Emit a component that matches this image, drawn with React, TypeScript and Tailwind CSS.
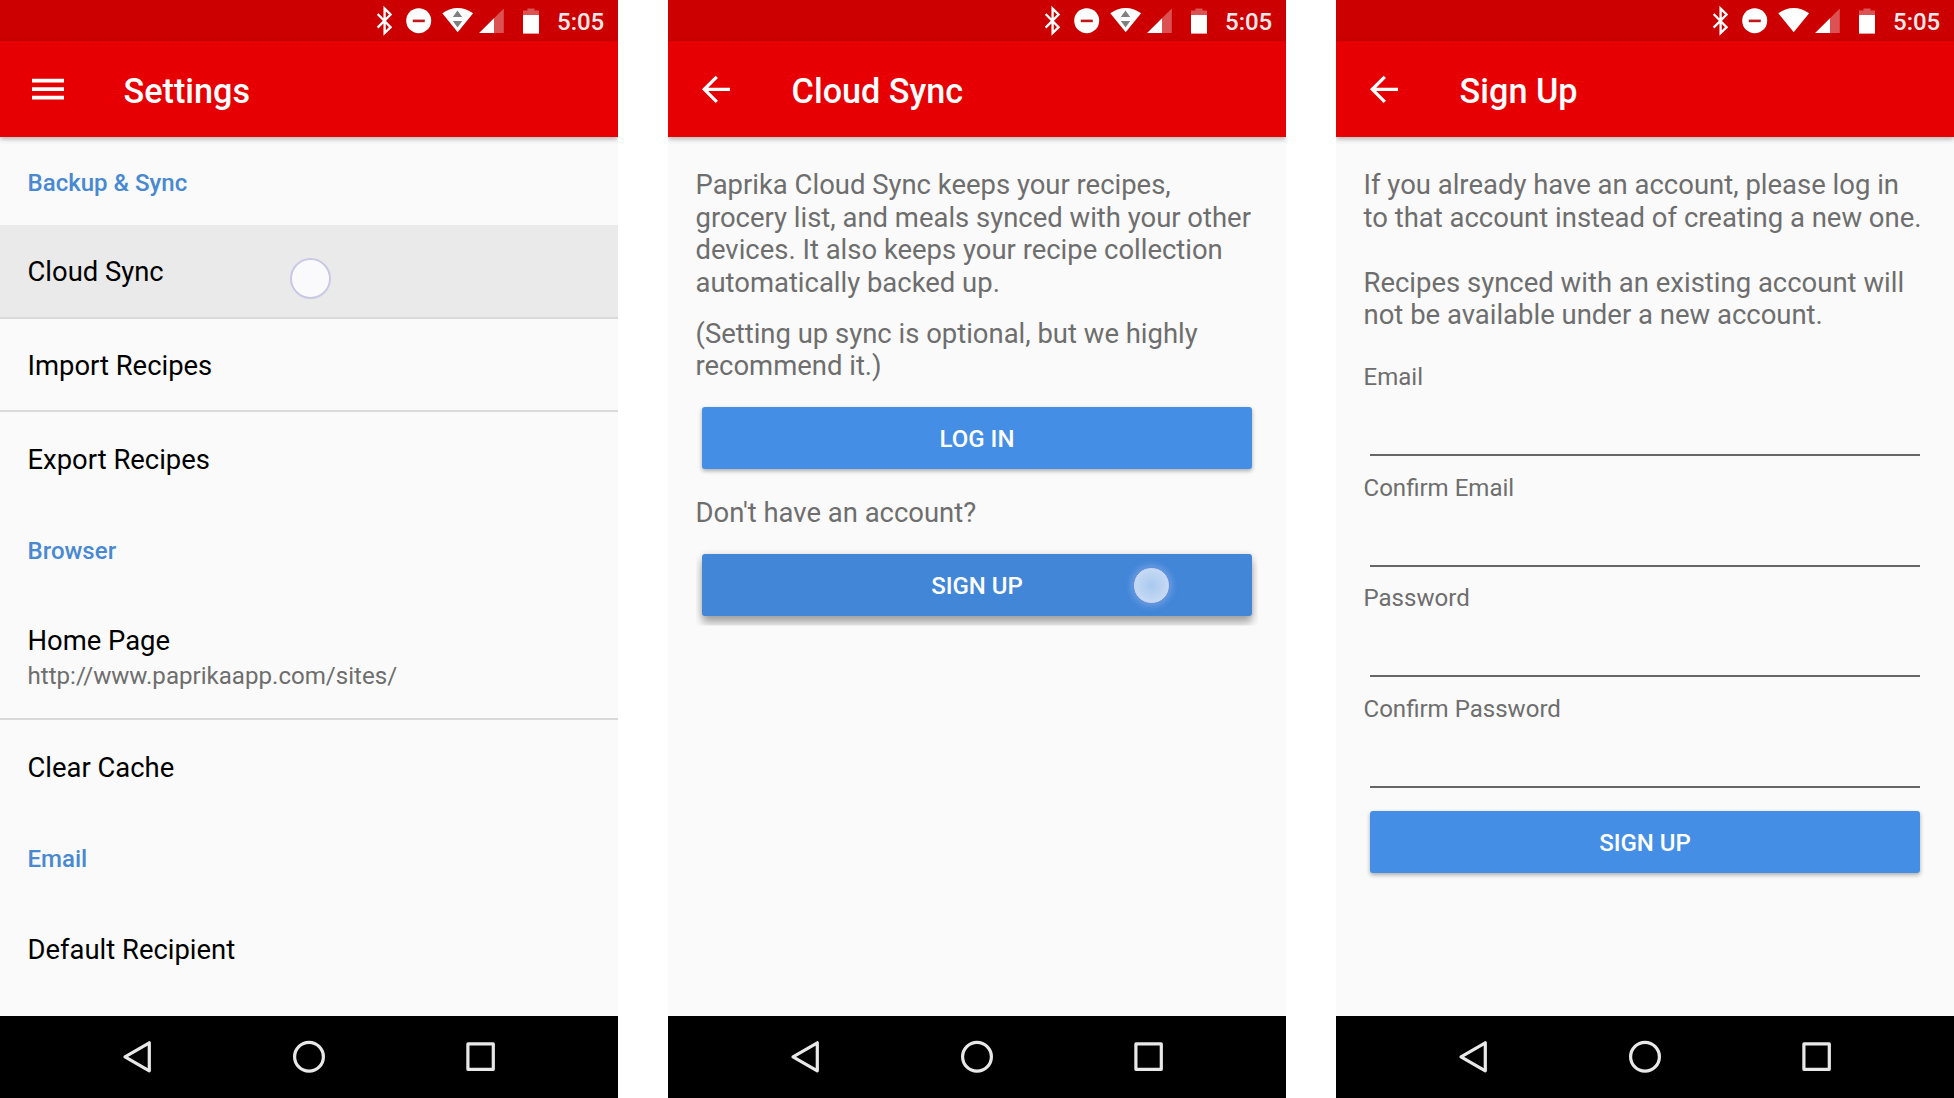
import React from "react";

function StatusBar({ activity }: { activity: boolean }) {
  return (
    <div className="flex h-[41px] shrink-0 items-start bg-[#cc0000]">
      <svg className="h-[41px] w-[548px] shrink-0" viewBox="0 0 548 41" fill="none">
        <path d="M377.6 14 L390.6 27.2 L384.6 33 V8.6 L390.6 14.5 L377.6 27.6" stroke="#fff" strokeWidth="2.3" />
        <circle cx="418.7" cy="20.7" r="12.5" fill="#fff" />
        <rect x="412.8" y="19.6" width="12" height="2.6" fill="#c1161a" />
        <path d="M442.3 13.2 Q457.7 2.8 473.1 13.2 L457.7 32.2 Z" fill="#fff" />
        {activity && <path d="M452.8 17 L457.5 10.6 L462.2 17 Z M452.8 21 L457.5 27.4 L462.2 21 Z" fill="#808080" />}
        <path d="M503.8 8.4 V33 H479.2 Z" fill="#fff" fillOpacity="0.32" />
        <path d="M494 18.2 V33 H479.2 Z" fill="#fff" />
        <path d="M523 15.2 V10.6 H527.4 V8.4 H534.6 V10.6 H539 V15.2 Z" fill="#fff" fillOpacity="0.32" />
        <rect x="523" y="15" width="16" height="18.6" fill="#fff" />
      </svg>
      <span className="pt-px pl-[9px] text-[24px] leading-[42px] font-medium text-[#fbe9e9]">5:05</span>
    </div>
  );
}

function AppBar({ title, menu }: { title: string; menu?: boolean }) {
  return (
    <header className="z-10 flex h-[96px] shrink-0 items-center bg-[#e60004] text-white shadow-[0_2px_5px_rgba(0,0,0,0.3)]">
      <svg className="h-[96px] w-[123.6px] shrink-0" viewBox="0 0 123.6 96" fill="none" stroke="#fff">
        {menu ? (
          <path d="M32 39.7 H64 M32 48.2 H64 M32 56.7 H64" strokeWidth="3.7" />
        ) : (
          <path d="M62 48.3 H36.5 M48.8 35.8 L36.3 48.3 L48.8 60.8" strokeWidth="3.3" />
        )}
      </svg>
      <h1 className="pt-[3px] text-[34.2px] leading-[40px] font-medium">{title}</h1>
    </header>
  );
}

function NavBar() {
  return (
    <nav className="h-[82px] shrink-0 bg-black">
      <svg className="h-[82px] w-[618px]" viewBox="0 0 618 82" fill="none" stroke="#e8e8e8" strokeWidth="3.2" strokeLinejoin="round">
        <path d="M149.3 26.8 V54.8 L125 40.8 Z" />
        <circle cx="309" cy="40.8" r="14.4" />
        <rect x="467.9" y="27.9" width="25.4" height="25.4" />
      </svg>
    </nav>
  );
}

function Phone({ title, menu, activity = false, children }: { title: string; menu?: boolean; activity?: boolean; children: React.ReactNode }) {
  return (
    <section className="flex h-[1098px] w-[618px] shrink-0 flex-col overflow-hidden bg-[#fafafa]">
      <StatusBar activity={activity} />
      <AppBar title={title} menu={menu} />
      <main className="flex flex-1 flex-col">{children}</main>
      <NavBar />
    </section>
  );
}

function SectionTitle({ children }: { children: React.ReactNode }) {
  return (
    <h2 className="flex h-[88px] items-center px-[27.5px] pt-[3px] text-[24.06px] leading-[28px] font-medium text-[#4889d2]">
      {children}
    </h2>
  );
}

const row = "flex h-[93.6px] items-center px-[27.5px] pt-[3px] text-[27.42px] leading-[32px] text-black";
const divider = " border-b-2 border-[#dadada]";

function Button({ children, pressed }: { children: React.ReactNode; pressed?: boolean }) {
  return (
    <button
      className={
        "relative mx-[6.5px] block h-[62px] rounded-[3px] pt-[2px] text-[24px] leading-[28px] font-medium text-white " +
        (pressed
          ? "bg-[#4286d8] shadow-[0_7px_9px_rgba(0,0,0,0.32),0_0_6px_rgba(0,0,0,0.12)] [clip-path:inset(-8px_-6px_-10px_-6px)]"
          : "bg-[#448ee5] shadow-[0_2px_4px_rgba(0,0,0,0.32)]")
      }
    >
      {children}
      {pressed && (
        <span className="absolute top-[13px] left-[431px] size-[37px] rounded-full border border-[#6d8fdc] bg-[radial-gradient(circle,#a9c9ee_0%,#cadcf5_80%)] shadow-[0_0_6px_2px_rgba(140,175,235,0.6)]" />
      )}
    </button>
  );
}

function Field({ label }: { label: string }) {
  return (
    <label className="flex h-[110.4px] flex-col">
      <span className="text-[24.06px] leading-[28px]">{label}</span>
      <input className="mx-[6.5px] h-[65px] border-b-2 border-[#666] bg-transparent outline-none" />
    </label>
  );
}

export default function App() {
  return (
    <div className="flex h-[1098px] w-[1954px] justify-between overflow-hidden bg-white font-[Roboto,sans-serif]">
      <Phone title="Settings" menu activity>
        <SectionTitle>Backup &amp; Sync</SectionTitle>
        <div className={row + " relative bg-[#eaeaea]" + divider}>
          Cloud Sync
          <span className="absolute top-[33px] left-[290px] size-[41px] rounded-full border-2 border-[#c9c8e6] bg-[#fafafc]" />
        </div>
        <div className={row + divider}>Import Recipes</div>
        <div className={row}>Export Recipes</div>
        <SectionTitle>Browser</SectionTitle>
        <div className={"flex h-[126px] flex-col justify-center px-[27.5px] pt-1.5" + divider}>
          <div className="text-[27.42px] leading-[35px] text-black">Home Page</div>
          <div className="text-[24.1px] leading-[34px] text-[#6e6e6e]">http://www.paprikaapp.com/sites/</div>
        </div>
        <div className={row}>Clear Cache</div>
        <SectionTitle>Email</SectionTitle>
        <div className={row}>Default Recipient</div>
      </Phone>

      <Phone title="Cloud Sync" activity>
        <div className="flex flex-col px-[27.5px] pt-[32px] text-[27.45px] leading-[32.6px] text-[#6e6e6e]">
          <p>
            Paprika Cloud Sync keeps your recipes,
            <br />
            grocery list, and meals synced with your other
            <br />
            devices. It also keeps your recipe collection
            <br />
            automatically backed up.
          </p>
          <p className="mt-[18.4px] mb-[23.6px]">
            (Setting up sync is optional, but we highly
            <br />
            recommend it.)
          </p>
          <Button>LOG IN</Button>
          <p className="mt-[28px] mb-[24.4px]">Don't have an account?</p>
          <Button pressed>SIGN UP</Button>
        </div>
      </Phone>

      <Phone title="Sign Up">
        <div className="flex flex-col px-[27.5px] pt-[32px] text-[27.47px] leading-[32.6px] text-[#6e6e6e]">
          <p>
            If you already have an account, please log in
            <br />
            <span className="whitespace-nowrap">to that account instead of creating a new one.</span>
          </p>
          <p className="mt-[32.6px] mb-[31.4px]">
            Recipes synced with an existing account will
            <br />
            not be available under a new account.
          </p>
          <Field label="Email" />
          <Field label="Confirm Email" />
          <Field label="Password" />
          <Field label="Confirm Password" />
          <div className="mt-[6.4px] flex flex-col">
            <Button>SIGN UP</Button>
          </div>
        </div>
      </Phone>
    </div>
  );
}
